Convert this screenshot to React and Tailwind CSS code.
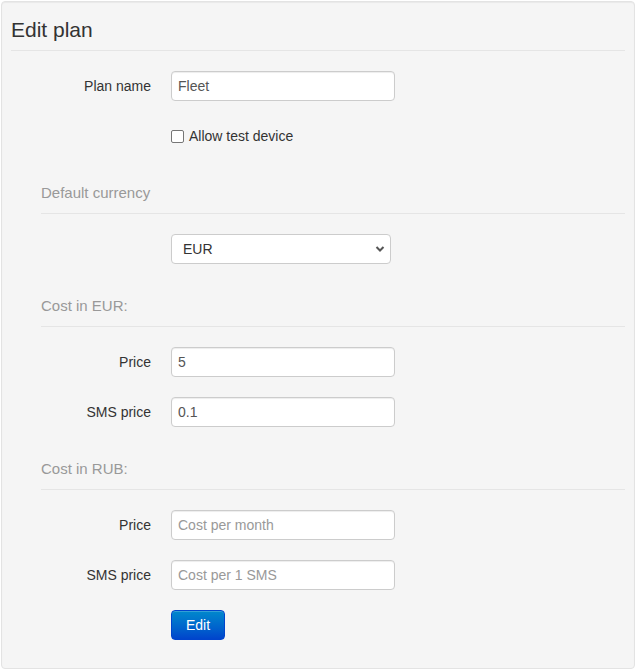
import React, { useState } from "react";

const font = { fontFamily: '"Liberation Sans", Arial, Helvetica, sans-serif' };

function Field({ label, value, placeholder, onChange }) {
  return (
    <div className="flex items-center">
      <label className="w-[140px] shrink-0 pr-0 text-right text-[14px] leading-[20px] text-[#333]">
        {label}
      </label>
      <input
        className="ml-[20px] box-border h-[30px] w-[224px] rounded-[4px] border border-[#ccc] bg-white px-[6px] text-[14px] leading-[20px] text-[#555] shadow-[inset_0_1px_1px_rgba(0,0,0,0.075)] outline-none placeholder:text-[#999]"
        value={value}
        placeholder={placeholder}
        onChange={(e) => onChange && onChange(e.target.value)}
      />
    </div>
  );
}

function SubLegend({ children, className = "" }) {
  return (
    <div
      className={
        "ml-[30px] h-[41px] border-b border-[#e5e5e5] text-[15px] leading-[40px] text-[#999] " +
        className
      }
    >
      {children}
    </div>
  );
}

export default function App() {
  const [name, setName] = useState("Fleet");
  const [allowTest, setAllowTest] = useState(false);
  const [currency, setCurrency] = useState("EUR");
  const [eurPrice, setEurPrice] = useState("5");
  const [eurSms, setEurSms] = useState("0.1");
  const [rubPrice, setRubPrice] = useState("");
  const [rubSms, setRubSms] = useState("");

  return (
    <div className="bg-white p-px" style={font}>
      <div className="rounded-[4px] border border-[#e3e3e3] bg-[#f5f5f5] px-[9px] pt-[8px] pb-[28px] shadow-[inset_0_1px_1px_rgba(0,0,0,0.05)]">
        <div className="mb-[20px] h-[41px] border-b border-[#e5e5e5] text-[21px] leading-[40px] text-[#333]">
          Edit plan
        </div>

        <div className="mb-[20px]">
          <Field label="Plan name" value={name} onChange={setName} />
        </div>

        <label className="ml-[160px] flex h-[25px] items-end text-[14px] leading-[20px] text-[#333]">
          <span className="flex h-[20px] items-center">
            <input
              type="checkbox"
              checked={allowTest}
              onChange={(e) => setAllowTest(e.target.checked)}
              className="m-0 h-[13px] w-[13px] appearance-none rounded-[2px] border border-[#767676] bg-white checked:bg-[#0075ff]"
            />
            <span className="ml-[5px]">Allow test device</span>
          </span>
        </label>

        <SubLegend className="mt-[27px] mb-[20px]">Default currency</SubLegend>

        <div className="relative ml-[160px] w-[220px]">
          <select
            value={currency}
            onChange={(e) => setCurrency(e.target.value)}
            className="box-border h-[30px] w-[220px] appearance-none rounded-[4px] border border-[#ccc] bg-white pl-[11px] text-[14px] text-[#333] outline-none"
          >
            <option>EUR</option>
            <option>RUB</option>
          </select>
          <svg
            className="pointer-events-none absolute right-[6px] top-[11px]"
            width="10"
            height="8"
            viewBox="0 0 10 8"
          >
            <path d="M1.5 2 L5 5.5 L8.5 2" fill="none" stroke="#555" strokeWidth="2" />
          </svg>
        </div>

        <SubLegend className="mt-[22px] mb-[20px]">Cost in EUR:</SubLegend>

        <div className="mb-[20px]">
          <Field label="Price" value={eurPrice} onChange={setEurPrice} />
        </div>
        <Field label="SMS price" value={eurSms} onChange={setEurSms} />

        <SubLegend className="mt-[22px] mb-[20px]">Cost in RUB:</SubLegend>

        <div className="mb-[20px]">
          <Field label="Price" value={rubPrice} placeholder="Cost per month" onChange={setRubPrice} />
        </div>
        <div className="mb-[20px]">
          <Field label="SMS price" value={rubSms} placeholder="Cost per 1 SMS" onChange={setRubSms} />
        </div>

        <div className="ml-[160px]">
          <button
            type="button"
            className="box-border h-[30px] w-[54px] rounded-[4px] border border-[#0044cc] bg-gradient-to-b from-[#0088cc] to-[#0044cc] text-[14px] leading-[20px] text-white shadow-[inset_0_1px_0_rgba(255,255,255,0.2)]"
          >
            Edit
          </button>
        </div>
      </div>
    </div>
  );
}
